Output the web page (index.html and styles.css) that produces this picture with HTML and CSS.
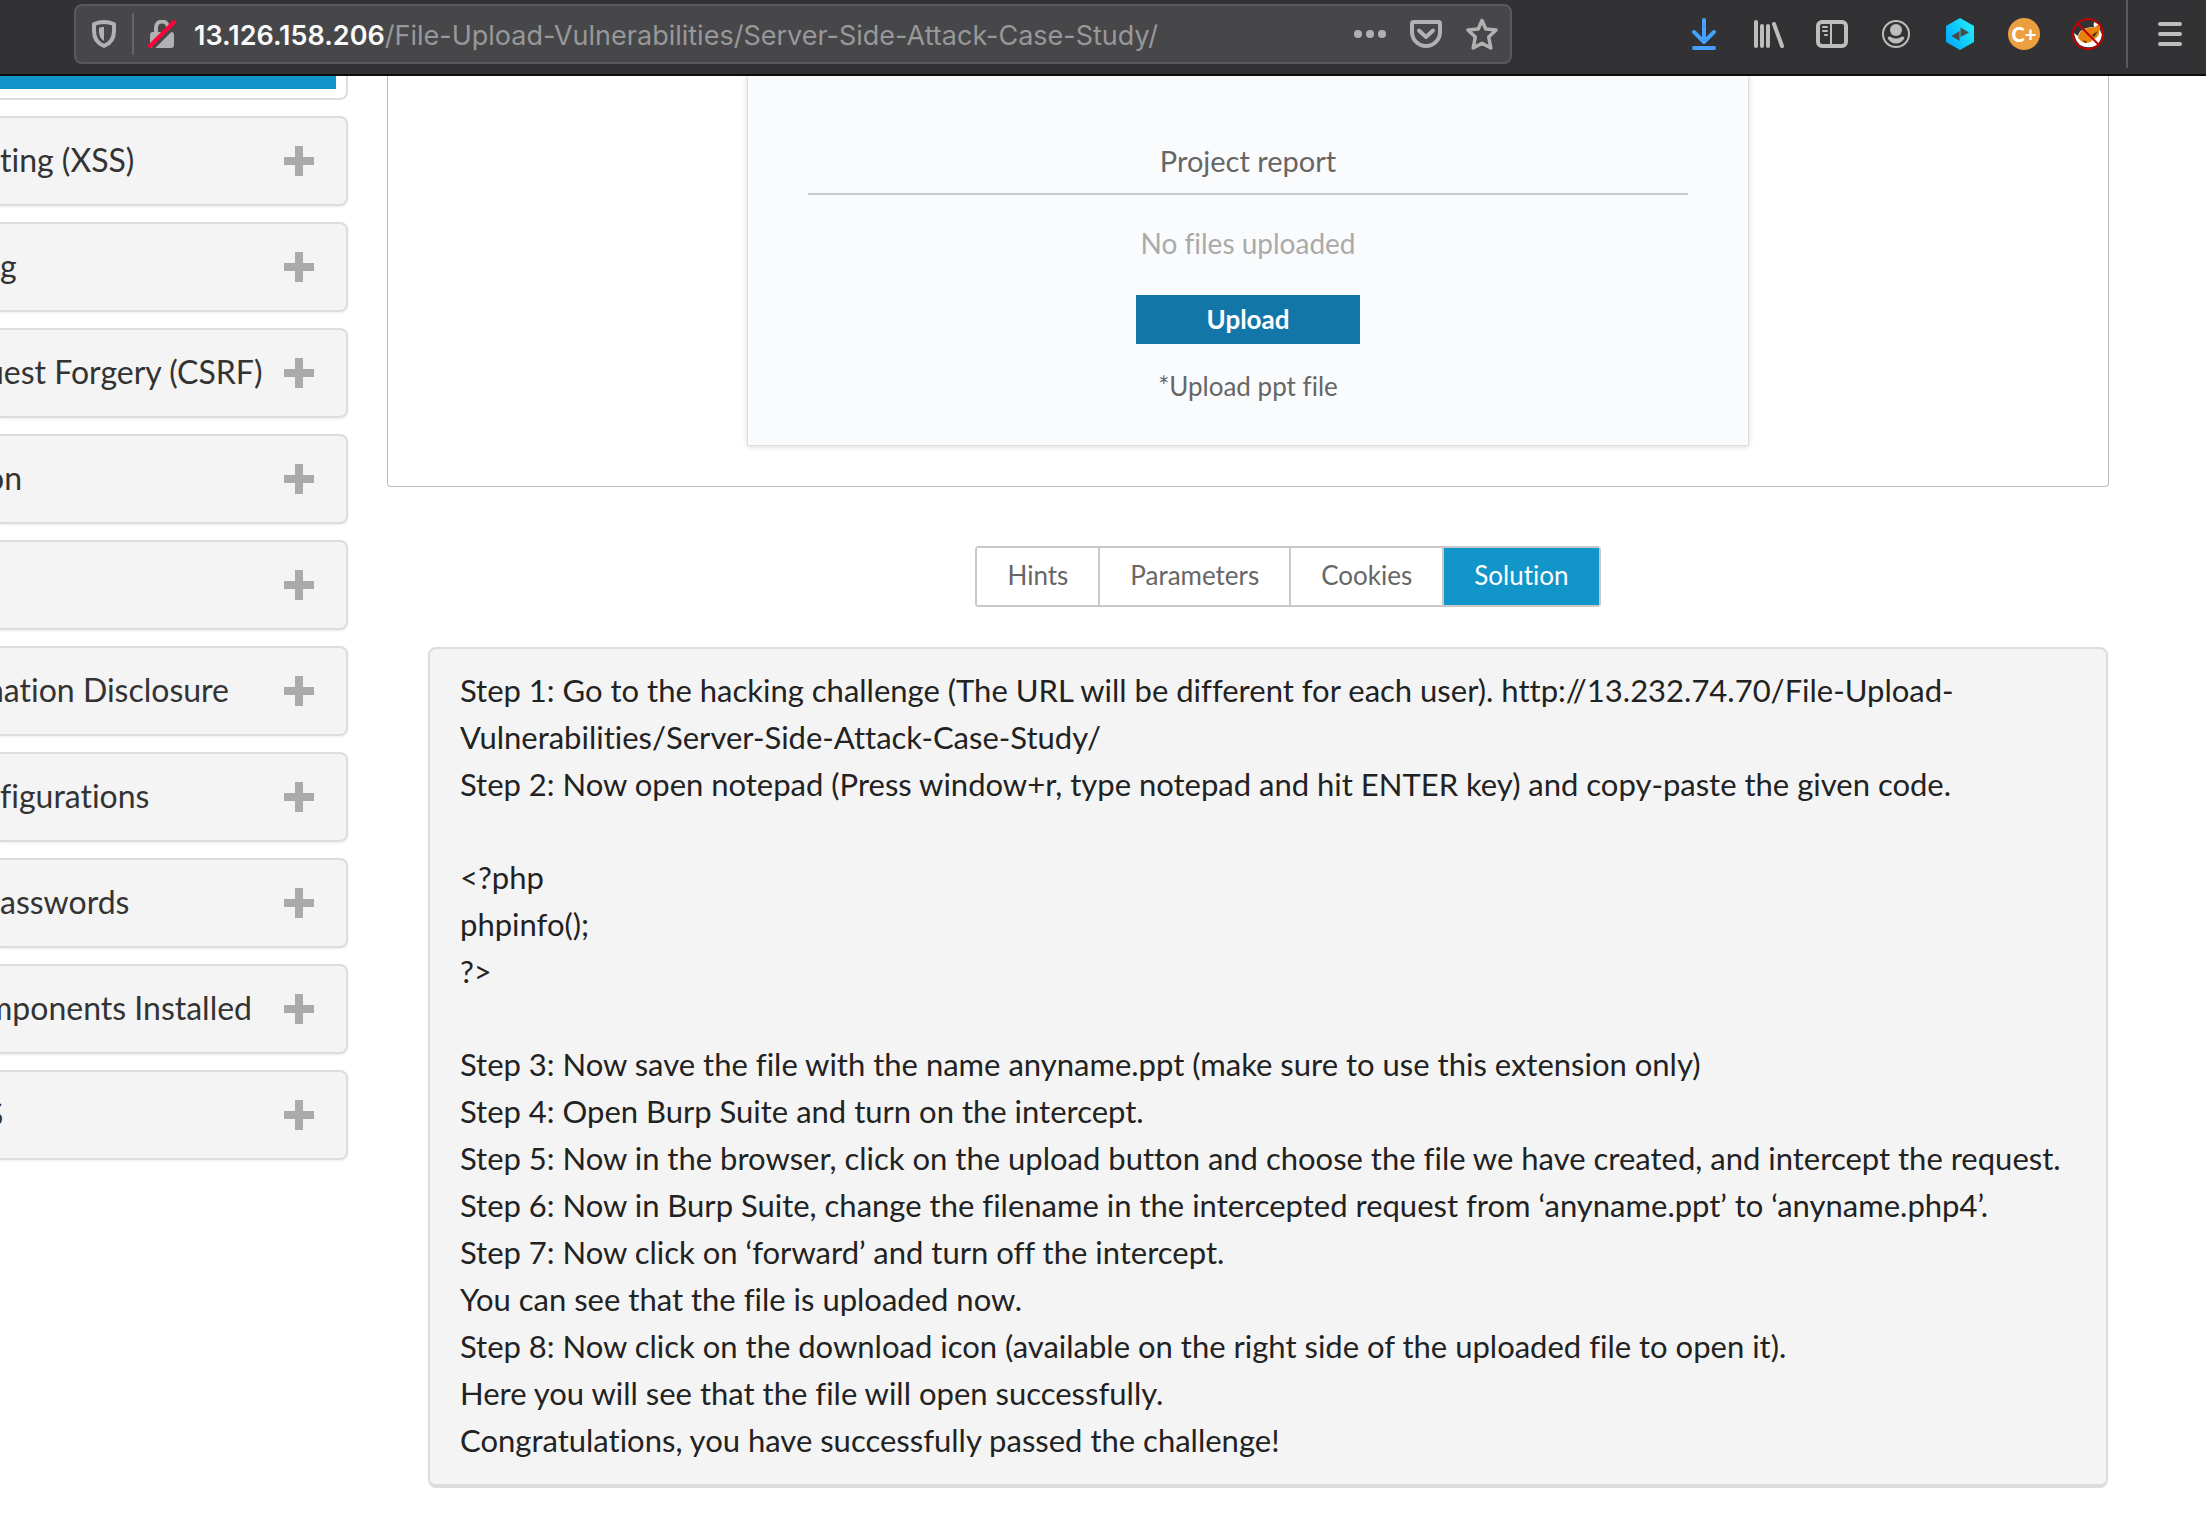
FILE: index.html
```html
<!DOCTYPE html>
<html lang="en">
<head>
<meta charset="utf-8">
<title>Server Side Attack Case Study</title>
<link rel="stylesheet" href="styles.css">
</head>
<body>
<header class="toolbar">
  <div class="urlbar">
    <svg class="ic-shield" width="24" height="28" viewBox="0 0 24 28" aria-hidden="true"><path d="M12 2C9 2 5.500 2.600 2 4V11C2 18.500 5.500 23.500 12 26C18.500 23.500 22 18.500 22 11V4C18.500 2.600 15 2 12 2Z" fill="none" stroke="#b1b1b3" stroke-width="4" stroke-linejoin="round"/><path d="M12 7C10 7 8.500 7.200 7 7.700V11C7 16 8.700 19 12 21Z" fill="#b1b1b3"/></svg>
    <span class="urlbar-divider"></span>
    <svg class="ic-lock" width="28" height="28" viewBox="0 0 28 28" aria-hidden="true"><path d="M8 13V7.500a6 6 0 0 1 12 0V13" fill="none" stroke="#b1b1b3" stroke-width="4"/><rect x="2" y="12" width="24" height="16" rx="3" fill="#b1b1b3"/><path d="M4.500 28L28 4.500" stroke="#474749" stroke-width="4"/><path d="M2 26L26 2" stroke="#ff0039" stroke-width="4" stroke-linecap="round"/></svg>
    <p class="url"><span class="url-host">13.126.158.206</span>/File-Upload-Vulnerabilities/Server-Side-Attack-Case-Study/</p>
    <button class="icon-btn" type="button" aria-label="Page actions"><svg width="32" height="32" viewBox="0 0 32 32" fill="#b1b1b3"><circle cx="4" cy="16" r="4"/><circle cx="16" cy="16" r="4"/><circle cx="28" cy="16" r="4"/></svg></button>
    <button class="icon-btn" type="button" aria-label="Save to Pocket"><svg width="32" height="32" viewBox="0 0 32 32" fill="none" stroke="#b1b1b3" stroke-width="4" stroke-linecap="round" stroke-linejoin="round"><path d="M3.500 4H28.500Q30 4 30 5.500V14A14 14 0 0 1 2 14V5.500Q2 4 3.500 4Z"/><path d="M9 12.500L16 19L23 12.500"/></svg></button>
    <button class="icon-btn" type="button" aria-label="Bookmark this page"><svg width="32" height="32" viewBox="0 0 32 32" fill="none" stroke="#b1b1b3" stroke-width="3.500" stroke-linejoin="round"><path d="M16 2.500L19.800 11L30 12L22.700 19L24.800 30L16 25.200L7.200 30L9.300 19L2 12L12.200 11Z"/></svg></button>
  </div>
  <div class="tools">
    <button class="icon-btn" type="button" aria-label="Downloads"><svg width="32" height="32" viewBox="0 0 32 32" fill="none" stroke="#45a1ff" stroke-width="4" stroke-linecap="round" stroke-linejoin="round"><path d="M16 2V24M6 14L16 24L26 14M6 30H26"/></svg></button>
    <button class="icon-btn" type="button" aria-label="Library"><svg width="32" height="32" viewBox="0 0 32 32" fill="none" stroke="#bdbdbe" stroke-width="4" stroke-linecap="round"><path d="M4 4V28M10 8V28M16 8V28M22 6L30 28" transform="translate(0 0)"/></svg></button>
    <button class="icon-btn" type="button" aria-label="Sidebars"><svg width="32" height="32" viewBox="0 0 32 32" fill="none" stroke="#bdbdbe"><rect x="2" y="6" width="28" height="24" rx="4" stroke-width="4" transform="translate(0 -2)"/><path d="M15 4V28" stroke-width="2"/><path d="M7 9H11M7 13H11M9 17H11" stroke-width="2" stroke-linecap="round"/></svg></button>
    <button class="icon-btn" type="button" aria-label="Account"><svg width="32" height="32" viewBox="0 0 32 32" fill="#bdbdbe"><circle cx="16" cy="16" r="13" fill="none" stroke="#bdbdbe" stroke-width="2"/><circle cx="16" cy="12" r="6"/><path d="M8 19Q9.500 18 11 19Q16 22 21 19Q22.500 18 24 19Q25 20 23.500 21.500Q20.500 25.500 16 25.500Q11.500 25.500 8.500 21.500Q7 20 8 19Z"/></svg></button>
    <button class="icon-btn" type="button" aria-label="Proxy extension"><svg width="32" height="32" viewBox="0 0 32 32"><defs><linearGradient id="hex" x1="0" y1="0.800" x2="1" y2="0.200"><stop offset="0" stop-color="#00a8ff"/><stop offset="1" stop-color="#22f0f8"/></linearGradient></defs><path d="M16 0L30 8V24L16 32L2 24V8Z" fill="url(#hex)"/><path d="M7.500 18L15.500 13V23ZM16.500 9.500L25 14.500L16.500 19Z" fill="#4a4a4a"/></svg></button>
    <button class="icon-btn" type="button" aria-label="Cookie extension"><span class="badge">C+</span></button>
    <button class="icon-btn" type="button" aria-label="Fox extension"><svg width="32" height="32" viewBox="0 0 32 32"><path d="M2 15L6 18Q7 13 12 11Q17 9 22 9Q21 6 22 4Q28 6 28 12L30 17Q29 24 23 28Q15 31 8 27Q3 22 2 15Z" fill="#fff"/><path d="M6 20Q7 13 13 11Q19 9 23 9L27 6Q29 10 27 14Q28 18 21 22Q16 27 10 24Z" fill="#e8820c"/><path d="M11 22L15 24L13 25ZM20 17L26 13L22 19Z" fill="#3b2a1a"/><circle cx="16" cy="16" r="15" fill="none" stroke="#c40000" stroke-width="2"/><path d="M5.500 5.500L26.500 26.500" stroke="#c40000" stroke-width="2"/></svg></button>
  </div>
  <div class="menu">
    <button class="icon-btn" type="button" aria-label="Open menu"><svg width="32" height="32" viewBox="0 0 32 32" stroke="#bdbdbe" stroke-width="4" stroke-linecap="round"><path d="M6 6H26M6 16H26M6 26H26"/></svg></button>
  </div>
</header>
<div class="page">
  <nav class="sidebar" aria-label="Topics">
    <div class="topic-open"><div class="topic-active"></div></div>
    <button class="topic" type="button"><span>ting (XSS)</span><i class="plus"></i></button>
    <button class="topic" type="button"><span>g</span><i class="plus"></i></button>
    <button class="topic topic-clipped" type="button"><span>uest Forgery (CSRF)</span><i class="plus"></i></button>
    <button class="topic topic-clipped" type="button"><span>on</span><i class="plus"></i></button>
    <button class="topic" type="button" aria-label="Expand topic"><span></span><i class="plus"></i></button>
    <button class="topic topic-clipped" type="button"><span>nation Disclosure</span><i class="plus"></i></button>
    <button class="topic" type="button"><span>figurations</span><i class="plus"></i></button>
    <button class="topic" type="button"><span>asswords</span><i class="plus"></i></button>
    <button class="topic topic-clipped" type="button"><span>mponents Installed</span><i class="plus"></i></button>
    <button class="topic topic-clipped" type="button"><span>S</span><i class="plus"></i></button>
  </nav>
  <main class="content">
    <section class="stage">
      <div class="card">
        <h2 class="card-title">Project report</h2>
        <p class="card-empty">No files uploaded</p>
        <button class="upload" type="button">Upload</button>
        <p class="card-note">*Upload ppt file</p>
      </div>
    </section>
    <div class="tabs-row">
      <div class="tabs">
        <button class="tab" type="button">Hints</button>
        <button class="tab" type="button">Parameters</button>
        <button class="tab" type="button">Cookies</button>
        <button class="tab tab-on" type="button">Solution</button>
      </div>
    </div>
    <article class="solution">
      <div>
        <p>Step 1: Go to the hacking challenge (The URL will be different for each user). http://13.232.74.70/File-Upload-Vulnerabilities/Server-Side-Attack-Case-Study/</p>
        <p>Step 2: Now open notepad (Press window+r, type notepad and hit ENTER key) and copy-paste the given code.</p>
      </div>
      <div>
        <p>&lt;?php</p>
        <p>phpinfo();</p>
        <p>?&gt;</p>
      </div>
      <div>
        <p>Step 3: Now save the file with the name anyname.ppt (make sure to use this extension only)</p>
        <p>Step 4: Open Burp Suite and turn on the intercept.</p>
        <p>Step 5: Now in the browser, click on the upload button and choose the file we have created, and intercept the request.</p>
        <p>Step 6: Now in Burp Suite, change the filename in the intercepted request from ‘anyname.ppt’ to ‘anyname.php4’.</p>
        <p>Step 7: Now click on ‘forward’ and turn off the intercept.</p>
        <p>You can see that the file is uploaded now.</p>
        <p>Step 8: Now click on the download icon (available on the right side of the uploaded file to open it).</p>
        <p>Here you will see that the file will open successfully.</p>
        <p>Congratulations, you have successfully passed the challenge!</p>
      </div>
    </article>
  </main>
</div>
</body>
</html>
```
FILE: styles.css
```css
* { box-sizing: border-box; }
body {
  margin: 0;
  background: #fff;
  color: #222;
  font-family: Lato, "Open Sans", sans-serif;
  font-variant-ligatures: none;
  overflow-x: hidden;
}
p, h2 { margin: 0; }
button { font-family: inherit; font-variant-ligatures: none; cursor: pointer; }

/* browser toolbar */
.toolbar {
  display: flex;
  height: 76px;
  padding-left: 74px;
  background: #323234;
  border-bottom: 2px solid #0c0c0d;
}
.urlbar {
  flex: 1;
  display: flex;
  align-items: center;
  height: 60px;
  margin-top: 4px;
  padding: 0 12px 0 16px;
  background: #474749;
  border: 2px solid #5a5a5c;
  border-radius: 8px;
}
.urlbar svg { flex: none; }
.urlbar-divider {
  width: 2px;
  height: 42px;
  margin: 0 14px 0 16px;
  background: #5f6670;
}
.url {
  flex: 1;
  margin-left: 18px;
  padding-top: 2px;
  color: #98989a;
  font-family: Inter, sans-serif;
  font-size: 27px;
  white-space: nowrap;
}
.url-host { color: #f9f9fa; font-weight: 600; }
.icon-btn {
  display: flex;
  width: 32px;
  height: 32px;
  margin-left: 24px;
  padding: 0;
  background: none;
  border: 0;
}
.tools {
  display: flex;
  align-items: center;
  gap: 32px;
  height: 68px;
  padding: 0 22px 0 176px;
}
.tools .icon-btn, .menu .icon-btn { margin: 0; }
.badge {
  width: 32px;
  height: 32px;
  border-radius: 50%;
  background: #eb9f3f;
  color: #fff;
  font-size: 20px;
  font-weight: 900;
  line-height: 32px;
  text-align: center;
}
.menu {
  display: flex;
  align-items: center;
  height: 68px;
  padding: 0 20px 0 26px;
  border-left: 2px solid #5b5b5d;
}

/* page */
.page { display: flex; }
.sidebar {
  flex: none;
  display: flex;
  flex-direction: column;
  gap: 16px;
  width: 348px;
}
.topic-open {
  height: 24px;
  padding-right: 10px;
  border: 2px solid #ddd;
  border-width: 0 2px 2px 0;
  border-radius: 0 0 8px 0;
}
.topic-active { height: 13px; background: #1295c9; }
.topic {
  display: flex;
  align-items: center;
  justify-content: space-between;
  height: 90px;
  padding: 0 32px 0 0;
  background: #f4f4f4;
  border: 2px solid #ddd;
  border-left: 0;
  border-radius: 0 8px 8px 0;
  box-shadow: 0 1px 3px rgba(0, 0, 0, 0.08);
  color: #333;
  font-size: 32px;
  text-align: left;
  white-space: nowrap;
}
.topic span { padding-bottom: 4px; }
.topic-clipped span { margin-left: -14px; }
.plus {
  width: 30px;
  height: 30px;
  background:
    linear-gradient(#aaa, #aaa) center / 30px 8px no-repeat,
    linear-gradient(#aaa, #aaa) center / 8px 30px no-repeat;
}
.content {
  flex: 1;
  min-width: 0;
  padding: 0 97px 38px 39px;
}
.stage {
  padding: 0 60px 40px;
  border: 1px solid #bbb;
  border-top: 0;
  border-radius: 0 0 4px 4px;
}
.card {
  display: flex;
  flex-direction: column;
  align-items: center;
  max-width: 1002px;
  margin: 0 auto;
  padding: 67px 60px 43px;
  background: #fafbfd;
  border: 1px solid #ddd;
  border-top: 0;
  box-shadow: 0 1px 5px rgba(0, 0, 0, 0.15);
  color: #666;
  text-align: center;
}
.card-title {
  align-self: stretch;
  padding-bottom: 14px;
  border-bottom: 2px solid #c8cacc;
  font-size: 29px;
  font-weight: 400;
  line-height: 36px;
}
.card-empty {
  margin-top: 30px;
  color: #aaa;
  font-size: 28px;
  line-height: 36px;
}
.upload {
  width: 224px;
  height: 49px;
  margin: 34px 0 26px;
  padding: 0 0 2px;
  background: #1277a8;
  border: 0;
  color: #fff;
  font-size: 26px;
  font-weight: 700;
}
.card-note { font-size: 26px; line-height: 32px; }

.tabs-row {
  display: flex;
  justify-content: center;
  padding: 59px 0 40px 80px;
}
.tabs {
  display: flex;
  border: 2px solid #c9c9c9;
  border-radius: 4px;
}
.tab {
  height: 57px;
  padding: 0 30px 4px;
  background: #fff;
  border: 0;
  border-right: 2px solid #c9c9c9;
  color: #666;
  font-size: 26px;
}
.tab-on { background: #1295c9; border-right: 0; color: #fff; }

.solution {
  display: flex;
  flex-direction: column;
  gap: 46px;
  margin: 0 1px 0 41px;
  padding: 18px 10px 20px 30px;
  background: #f4f4f4;
  border: 2px solid #ddd;
  border-bottom-width: 4px;
  border-radius: 8px;
  font-size: 31px;
  line-height: 47px;
}
```
